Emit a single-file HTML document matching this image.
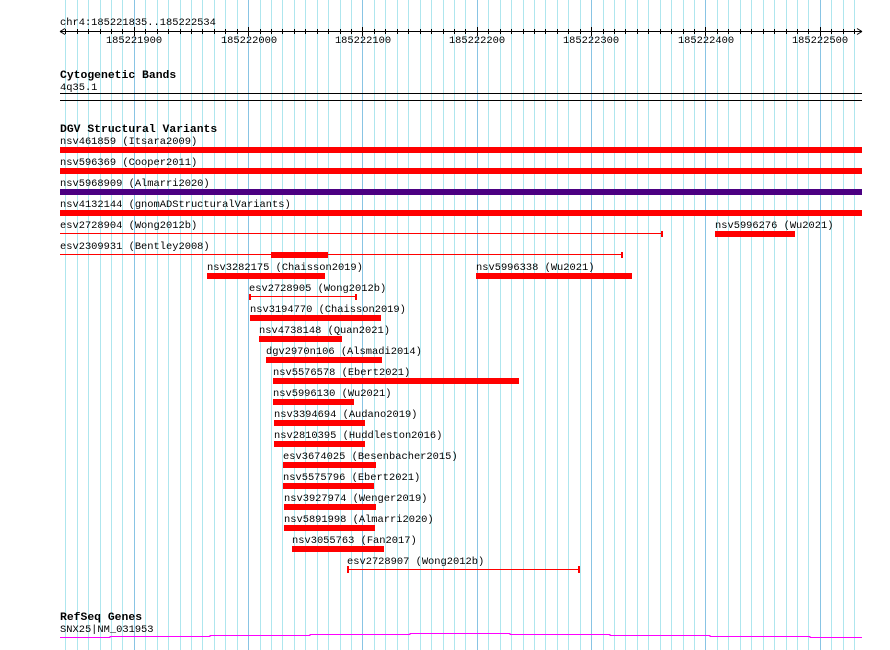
<!DOCTYPE html>
<html><head><meta charset="utf-8"><style>
html,body{margin:0;padding:0;background:#fff;width:890px;height:650px;overflow:hidden}
svg text{font-family:"Liberation Mono","DejaVu Sans Mono",monospace;font-size:10.4px;fill:#000}
svg text.b{font-weight:bold;font-size:11.4px}
</style></head><body>
<svg width="890" height="650" viewBox="0 0 890 650" xmlns="http://www.w3.org/2000/svg">
<rect width="890" height="650" fill="#fff"/>
<g stroke="#aee6ee" stroke-width="1">
<path d="M65.5 0V650M77.5 0V650M88.5 0V650M100.5 0V650M111.5 0V650M122.5 0V650M145.5 0V650M157.5 0V650M168.5 0V650M180.5 0V650M191.5 0V650M202.5 0V650M214.5 0V650M225.5 0V650M237.5 0V650M260.5 0V650M271.5 0V650M282.5 0V650M294.5 0V650M305.5 0V650M317.5 0V650M328.5 0V650M340.5 0V650M351.5 0V650M374.5 0V650M385.5 0V650M397.5 0V650M408.5 0V650M420.5 0V650M431.5 0V650M443.5 0V650M454.5 0V650M465.5 0V650M488.5 0V650M500.5 0V650M511.5 0V650M523.5 0V650M534.5 0V650M545.5 0V650M557.5 0V650M568.5 0V650M580.5 0V650M603.5 0V650M614.5 0V650M625.5 0V650M637.5 0V650M648.5 0V650M660.5 0V650M671.5 0V650M683.5 0V650M694.5 0V650M717.5 0V650M728.5 0V650M740.5 0V650M751.5 0V650M763.5 0V650M774.5 0V650M786.5 0V650M797.5 0V650M808.5 0V650M831.5 0V650M843.5 0V650M854.5 0V650"/>
</g>
<g stroke="#88c4e4" stroke-width="1">
<path d="M134.5 0V650M248.5 0V650M362.5 0V650M477.5 0V650M591.5 0V650M705.5 0V650M820.5 0V650"/>
</g>
<!-- ruler -->
<text x="60" y="25">chr4:185221835..185222534</text>
<g stroke="#000" stroke-width="1" fill="none">
<path d="M60 31.5H862M60 31.5l5 -3M60 31.5l5 3M862 31.5l-5 -3M862 31.5l-5 3"/>
<path d="M65.5 29V34M77.5 29V34M88.5 29V34M100.5 29V34M111.5 29V34M122.5 29V34M145.5 29V34M157.5 29V34M168.5 29V34M180.5 29V34M191.5 29V34M202.5 29V34M214.5 29V34M225.5 29V34M237.5 29V34M260.5 29V34M271.5 29V34M282.5 29V34M294.5 29V34M305.5 29V34M317.5 29V34M328.5 29V34M340.5 29V34M351.5 29V34M374.5 29V34M385.5 29V34M397.5 29V34M408.5 29V34M420.5 29V34M431.5 29V34M443.5 29V34M454.5 29V34M465.5 29V34M488.5 29V34M500.5 29V34M511.5 29V34M523.5 29V34M534.5 29V34M545.5 29V34M557.5 29V34M568.5 29V34M580.5 29V34M603.5 29V34M614.5 29V34M625.5 29V34M637.5 29V34M648.5 29V34M660.5 29V34M671.5 29V34M683.5 29V34M694.5 29V34M717.5 29V34M728.5 29V34M740.5 29V34M751.5 29V34M763.5 29V34M774.5 29V34M786.5 29V34M797.5 29V34M808.5 29V34M831.5 29V34M843.5 29V34M854.5 29V34"/>
<path d="M134.5 27V36M248.5 27V36M362.5 27V36M477.5 27V36M591.5 27V36M705.5 27V36M820.5 27V36"/>
</g>
<g text-anchor="middle">
<text x="134" y="43">185221900</text><text x="249" y="43">185222000</text><text x="363" y="43">185222100</text><text x="477" y="43">185222200</text><text x="591" y="43">185222300</text><text x="706" y="43">185222400</text><text x="820" y="43">185222500</text>
</g>
<!-- cytoband -->
<text class="b" x="60" y="78">Cytogenetic Bands</text>
<text x="60" y="90">4q35.1</text>
<path d="M60 93.5H862M60 100.5H862" stroke="#000"/>
<!-- DGV -->
<text class="b" x="60" y="132">DGV Structural Variants</text>
<g fill="#f00">
<text x="60" y="144">nsv461859 (Itsara2009)</text>
<rect x="60" y="147" width="802" height="6"/>
<text x="60" y="165">nsv596369 (Cooper2011)</text>
<rect x="60" y="168" width="802" height="6"/>
<text x="60" y="186">nsv5968909 (Almarri2020)</text>
<rect x="60" y="189" width="802" height="6" fill="#4b0082"/>
<text x="60" y="207">nsv4132144 (gnomADStructuralVariants)</text>
<rect x="60" y="210" width="802" height="6"/>
<text x="60" y="228">esv2728904 (Wong2012b)</text>
<rect x="60" y="233" width="602" height="1"/><rect x="661" y="231" width="2" height="6"/>
<text x="715" y="228">nsv5996276 (Wu2021)</text>
<rect x="715" y="231" width="80" height="6"/>
<text x="60" y="249">esv2309931 (Bentley2008)</text>
<rect x="60" y="254" width="562" height="1"/><rect x="621" y="252" width="2" height="6"/>
<rect x="271" y="252" width="57" height="6"/>
<text x="207" y="270">nsv3282175 (Chaisson2019)</text>
<rect x="207" y="273" width="118" height="6"/>
<text x="476" y="270">nsv5996338 (Wu2021)</text>
<rect x="476" y="273" width="156" height="6"/>
<text x="249" y="291">esv2728905 (Wong2012b)</text>
<rect x="249" y="296" width="107" height="1"/><rect x="249" y="294" width="2" height="6"/><rect x="355" y="294" width="2" height="6"/>
<text x="250" y="312">nsv3194770 (Chaisson2019)</text>
<rect x="250" y="315" width="131" height="6"/>
<text x="259" y="333">nsv4738148 (Quan2021)</text>
<rect x="259" y="336" width="83" height="6"/>
<text x="266" y="354">dgv2970n106 (Alsmadi2014)</text>
<rect x="266" y="357" width="116" height="6"/>
<text x="273" y="375">nsv5576578 (Ebert2021)</text>
<rect x="273" y="378" width="246" height="6"/>
<text x="273" y="396">nsv5996130 (Wu2021)</text>
<rect x="273" y="399" width="81" height="6"/>
<text x="274" y="417">nsv3394694 (Audano2019)</text>
<rect x="274" y="420" width="91" height="6"/>
<text x="274" y="438">nsv2810395 (Huddleston2016)</text>
<rect x="274" y="441" width="91" height="6"/>
<text x="283" y="459">esv3674025 (Besenbacher2015)</text>
<rect x="283" y="462" width="93" height="6"/>
<text x="283" y="480">nsv5575796 (Ebert2021)</text>
<rect x="283" y="483" width="91" height="6"/>
<text x="284" y="501">nsv3927974 (Wenger2019)</text>
<rect x="284" y="504" width="92" height="6"/>
<text x="284" y="522">nsv5891998 (Almarri2020)</text>
<rect x="284" y="525" width="91" height="6"/>
<text x="292" y="543">nsv3055763 (Fan2017)</text>
<rect x="292" y="546" width="92" height="6"/>
<text x="347" y="564">esv2728907 (Wong2012b)</text>
<rect x="348" y="569" width="232" height="1"/><rect x="347" y="566" width="2" height="7"/><rect x="578" y="566" width="2" height="7"/>
</g>
<g fill="#000">
</g>
<!-- RefSeq -->
<text class="b" x="60" y="620">RefSeq Genes</text>
<text x="60" y="632">SNX25|NM_031953</text>
<path d="M60 637.5H110V636.5H210V635.5H310V634.5H410V633.5H510V634.5H610V635.5H710V636.5H810V637.5H862" stroke="#f0f" fill="none"/>
</svg>
</body></html>
